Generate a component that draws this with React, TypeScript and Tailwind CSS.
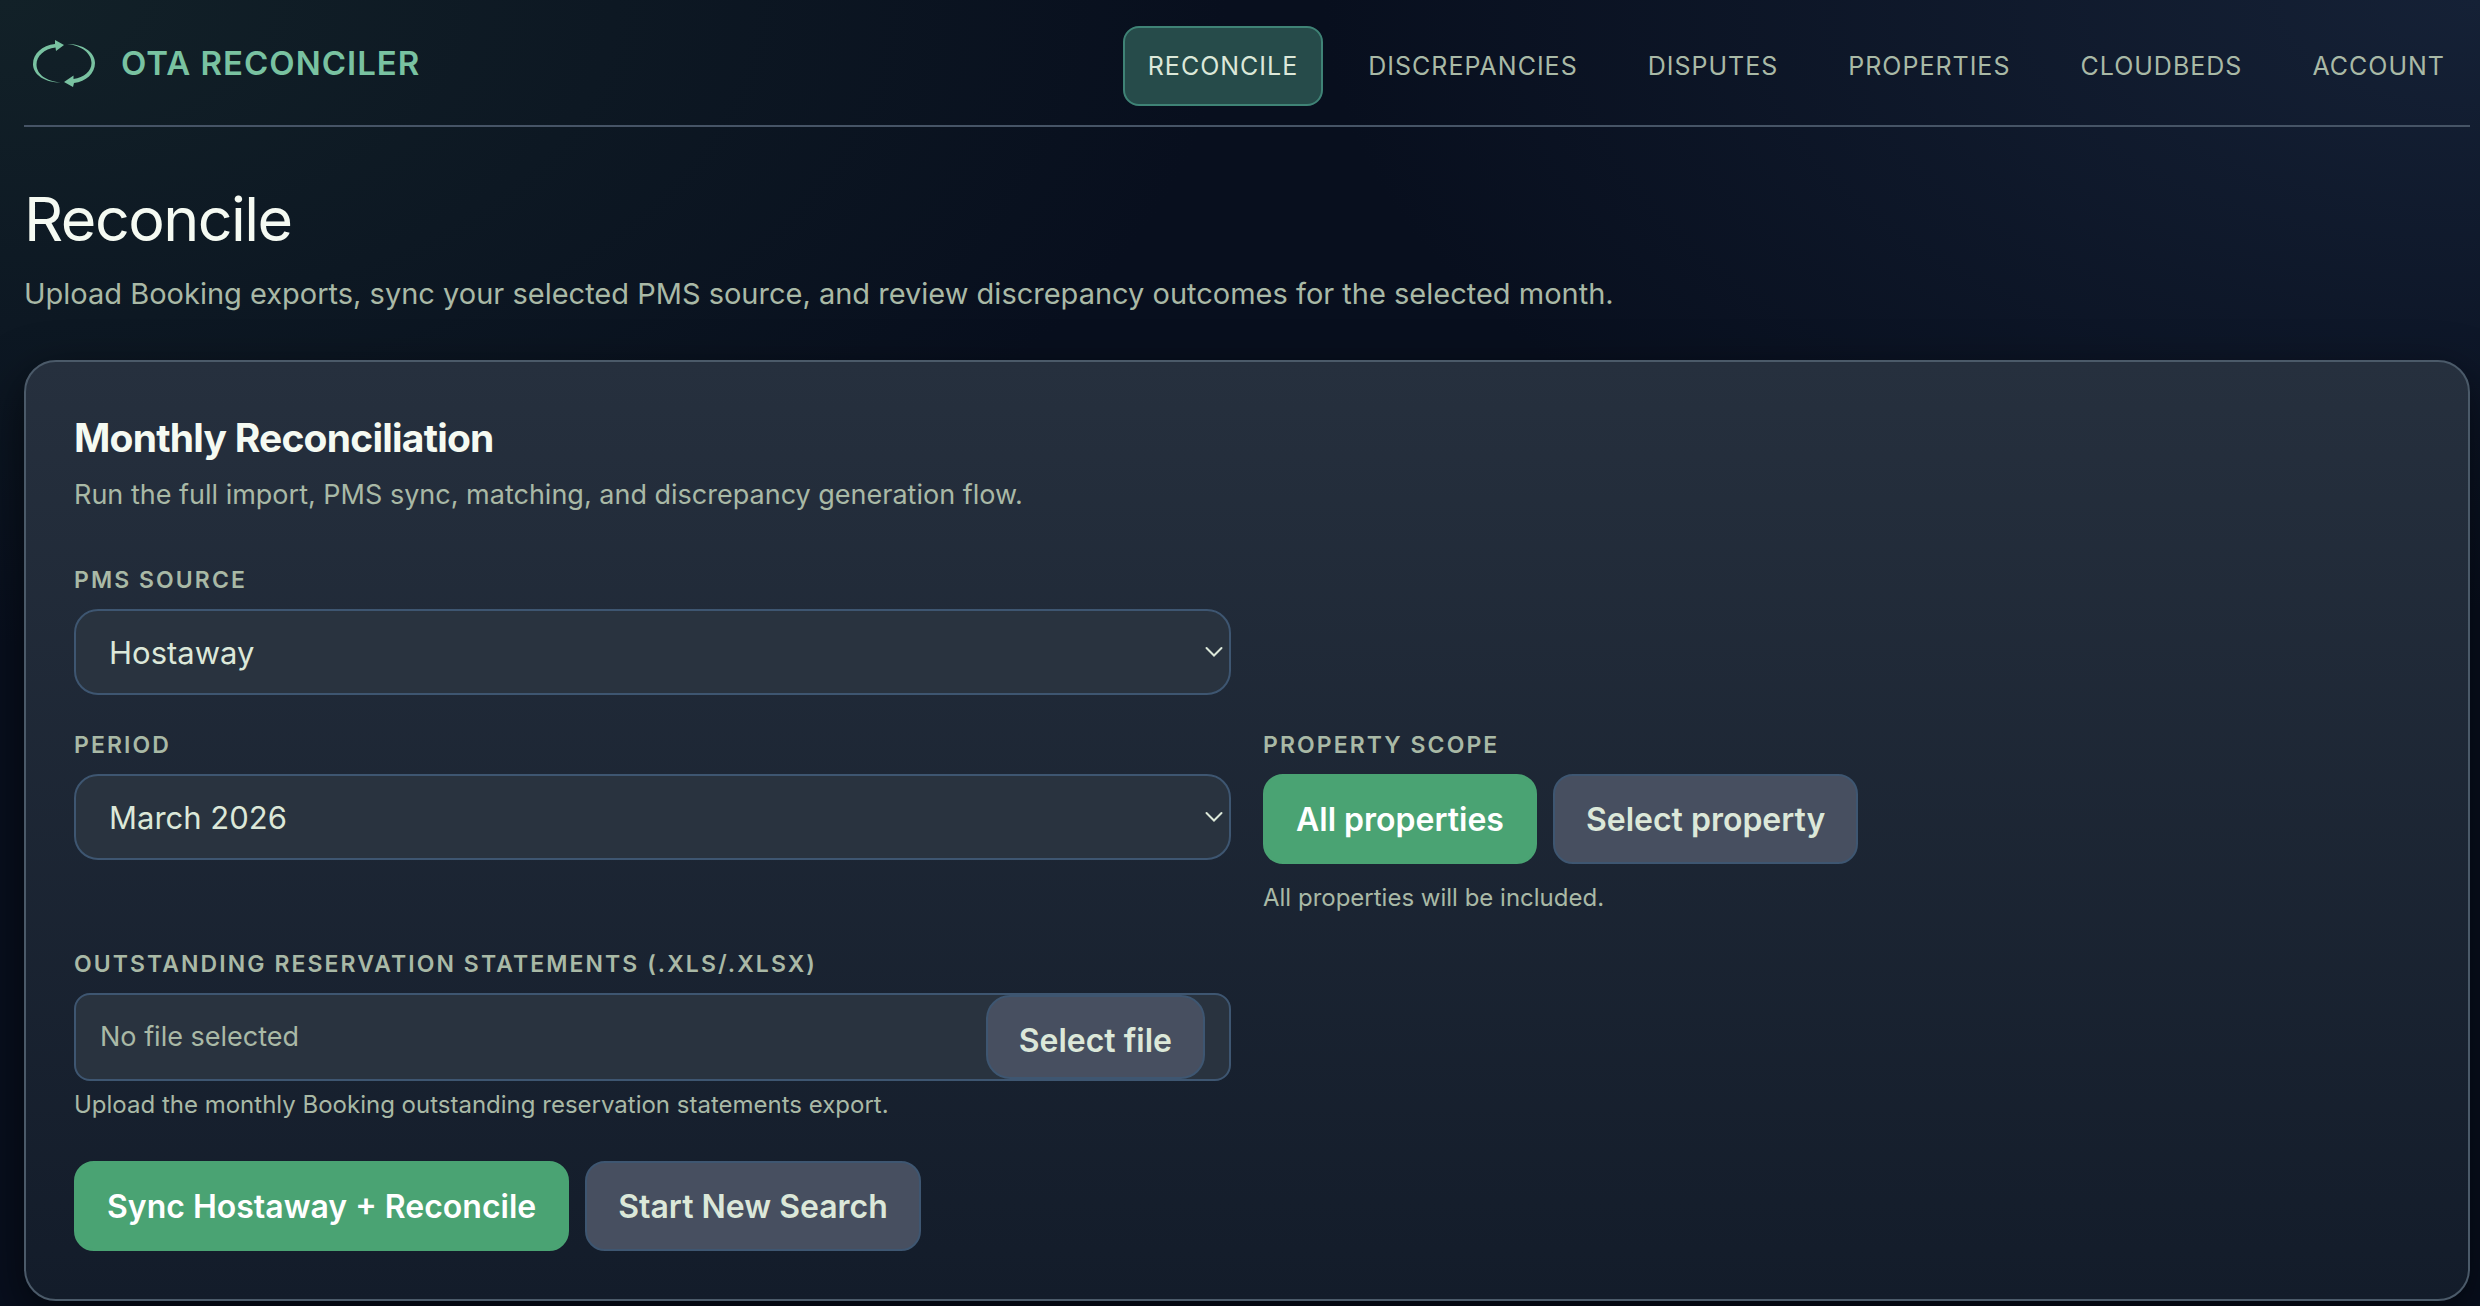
import React, { useRef, useState } from 'react'

const navItems = ['Reconcile', 'Discrepancies', 'Disputes', 'Properties', 'Cloudbeds', 'Account']

const labelClass = 'block text-[23px] leading-8 font-semibold uppercase tracking-[0.09em] text-[#a9b9a6]'
const hintClass = 'text-[24px] leading-8 text-[#a9b9a6]'
const buttonClass = 'h-[90px] rounded-[20px] border-2 px-[31px] pt-[2px] text-[32px] font-semibold'
const primaryClass = 'border-[#4aa373] bg-[#4aa373] text-white'
const secondaryClass = 'border-[#3e5671] bg-[#474f60] text-[#dce8d9]'

function Logo() {
  return (
    <svg width="64" height="50" viewBox="0 0 64 50" fill="#79c2a1" aria-hidden="true">
      <path d="M23 1 L32 6 L24 12 L23.500 8.500 C12 10 4.500 17 4.500 25.500 C4.500 35 14 42.500 29 43.500 C13 43.500 1 36 1 25 C1 14.500 10 6.500 23 5 Z" />
      <path d="M41 48 L32 43 L41.500 36.500 L41.500 40 C52 38.500 59.500 32 59.500 24 C59.500 14.500 50 6.500 35 5 C51 5 63 13 63 24 C63 34.500 54 42.500 42 44 Z" />
    </svg>
  )
}

interface SelectFieldProps {
  id: string
  label: string
  options: string[]
}

function SelectField({ id, label, options }: SelectFieldProps) {
  return (
    <div>
      <label htmlFor={id} className={labelClass}>{label}</label>
      <div className="relative mt-[13px]">
        <select
          id={id}
          className="block h-[86px] w-full appearance-none rounded-[24px] border-2 border-[#3e5671] bg-[#29333f] px-[33px] pt-[2px] text-[31px] text-[#dce8d9]"
        >
          {options.map((option) => (
            <option key={option}>{option}</option>
          ))}
        </select>
        <svg
          className="pointer-events-none absolute top-1/2 right-2 h-[11px] w-[18px] -translate-y-1/2"
          viewBox="0 0 18 11"
          fill="none"
          stroke="#dce8d9"
          strokeWidth="2"
          strokeLinecap="round"
          aria-hidden="true"
        >
          <path d="M1.500 1.500 9 9 16.500 1.500" />
        </svg>
      </div>
    </div>
  )
}

export default function App() {
  const [scope, setScope] = useState('all')
  const [fileName, setFileName] = useState('')
  const fileRef = useRef<HTMLInputElement>(null)

  return (
    <div className="min-h-screen overflow-hidden bg-[#080f1e] bg-[radial-gradient(ellipse_at_0%_0%,#122128_0%,transparent_35%),radial-gradient(ellipse_at_100%_0%,#152136_0%,transparent_33%)] pr-[10px] pb-1 pl-6 font-[Inter,sans-serif]">
      {/* Header */}
      <header className="flex items-center justify-between border-b-2 border-[#465466] pt-[26px] pb-[19px]">
        <a href="#" className="flex items-center gap-[25px] pb-1 pl-2">
          <Logo />
          <span className="text-[33px] font-semibold tracking-[0.03em] text-[#79c2a1]">OTA RECONCILER</span>
        </a>
        <nav className="flex gap-5">
          {navItems.map((item, index) => (
            <a
              key={item}
              href="#"
              className={
                'flex h-20 items-center rounded-2xl border-2 px-[23px] pt-[2px] text-[25px] uppercase tracking-[0.04em] ' +
                (index === 0
                  ? 'border-[#3f8376] bg-[#264b4a] text-[#dce8d9]'
                  : 'border-transparent text-[#a9b9a6]')
              }
            >
              {item}
            </a>
          ))}
        </nav>
      </header>

      <main>
        <h1 className="mt-14 text-[61px] leading-[72px] tracking-tight text-[#f5faf2]">Reconcile</h1>
        <p className="mt-4 text-[29px] leading-[46px] text-[#a9b9a6]">
          Upload Booking exports, sync your selected PMS source, and review discrepancy outcomes for the selected month.
        </p>

        {/* Reconciliation card */}
        <section className="mt-[43px] rounded-[32px] border-2 border-[#4b5a69] bg-linear-to-b from-[#26303e] to-[#131c2a] p-12 shadow-[0_16px_48px_rgba(0,0,0,0.6)]">
          <h2 className="text-[39px] leading-[56px] font-bold tracking-[-0.02em] text-[#f5faf2]">Monthly Reconciliation</h2>
          <p className="mt-2 text-[27px] leading-[42px] text-[#a9b9a6]">
            Run the full import, PMS sync, matching, and discrepancy generation flow.
          </p>

          <form className="mt-12" onSubmit={(event) => event.preventDefault()}>
            <div className="grid grid-cols-2 gap-x-8 gap-y-[34px]">
              <SelectField id="pms-source" label="PMS Source" options={['Hostaway', 'Cloudbeds']} />
              <div />
              <SelectField id="period" label="Period" options={['March 2026', 'February 2026', 'January 2026']} />

              <div role="group" aria-labelledby="scope-label">
                <span id="scope-label" className={labelClass}>Property Scope</span>
                <div className="mt-[13px] flex gap-4">
                  <button
                    type="button"
                    onClick={() => setScope('all')}
                    className={`${buttonClass} ${scope === 'all' ? primaryClass : secondaryClass}`}
                  >
                    All properties
                  </button>
                  <button
                    type="button"
                    onClick={() => setScope('one')}
                    className={`${buttonClass} ${scope === 'one' ? primaryClass : secondaryClass}`}
                  >
                    Select property
                  </button>
                </div>
                <p className={`mt-[18px] ${hintClass}`}>All properties will be included.</p>
              </div>

              <div>
                <label htmlFor="statements" className={labelClass}>
                  Outstanding Reservation Statements (.xls/.xlsx)
                </label>
                <div className="mt-[13px] flex h-[88px] items-center justify-between rounded-2xl border-2 border-[#3e5671] bg-[#29333f] pr-6 pl-6">
                  <span className="text-[27px] text-[#a9b9a6]">{fileName || 'No file selected'}</span>
                  <input
                    ref={fileRef}
                    id="statements"
                    type="file"
                    accept=".xls,.xlsx"
                    className="hidden"
                    onChange={(event) => setFileName(event.target.files?.[0]?.name ?? '')}
                  />
                  <button
                    type="button"
                    onClick={() => fileRef.current?.click()}
                    className={`h-full rounded-[24px] border-2 px-[31px] pt-2 text-[32px] font-semibold ${secondaryClass}`}
                  >
                    Select file
                  </button>
                </div>
                <p className={`mt-2 ${hintClass}`}>Upload the monthly Booking outstanding reservation statements export.</p>
              </div>
            </div>

            <div className="mt-10 flex gap-4">
              <button type="submit" className={`${buttonClass} ${primaryClass}`}>Sync Hostaway + Reconcile</button>
              <button type="button" className={`${buttonClass} ${secondaryClass}`}>Start New Search</button>
            </div>
          </form>
        </section>
      </main>
    </div>
  )
}
